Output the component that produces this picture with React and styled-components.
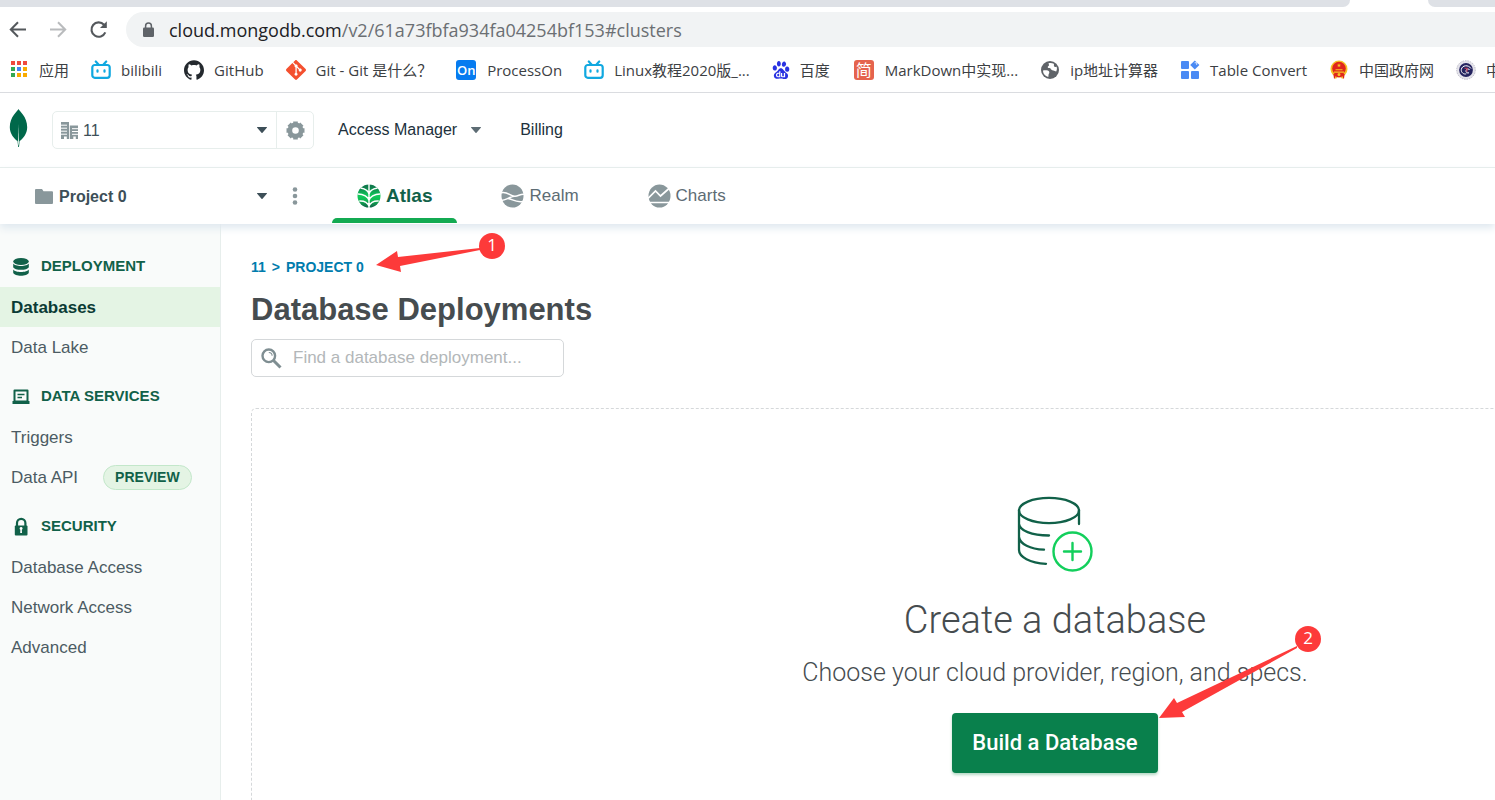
import React from "react";
import styled, { createGlobalStyle } from "styled-components";
import { SiBilibili, SiGithub, SiGit, SiBaidu } from "react-icons/si";

const sans = `"Liberation Sans", Arial, sans-serif`;
const ui = `"Open Sans", "Noto Sans CJK SC", sans-serif`;
const light = `Roboto, "Liberation Sans", sans-serif`;

const GlobalStyle = createGlobalStyle`
  *, *::before, *::after { box-sizing: border-box; }
  body { margin: 0; background: #fff; font-family: ${sans}; color: #3d4f58; }
  button, input, select { font: inherit; color: inherit; }
  a { color: inherit; text-decoration: none; }
  svg { display: block; flex: none; }
`;

const Page = styled.div`
  display: flex;
  flex-direction: column;
  height: 100vh;
  min-height: 600px;
  overflow: hidden;
`;

/* ---------- browser chrome ---------- */

const TabStrip = styled.div`
  display: flex;
  justify-content: flex-end;
  flex: none;
  gap: 78px;
  height: 7px;
`;
const StripPart = styled.div`
  background: #dee1e6;
  flex: ${(p) => (p.$last ? "0 0 67px" : "1")};
  border-radius: ${(p) => (p.$last ? "0 0 0 8px" : "0 0 8px 0")};
`;

const Toolbar = styled.div`
  display: flex;
  align-items: center;
  flex: none;
  height: 45px;
  padding: 0 0 0 8px;
`;
const NavButton = styled.button`
  display: grid;
  place-items: center;
  width: 20px;
  height: 20px;
  padding: 0;
  margin-right: 20px;
  border: 0;
  background: none;
  color: ${(p) => (p.disabled ? "#b9bbbd" : "#54585c")};
`;
const AddressBar = styled.div`
  display: flex;
  align-items: center;
  flex: 1;
  gap: 14px;
  height: 35px;
  margin-left: -2px;
  padding-left: 16px;
  border-radius: 18px 0 0 18px;
  background: #f1f3f4;
`;
const Address = styled.div`
  font: 18px/32px ${ui};
  color: #6b6f73;
  white-space: nowrap;
  b { font-weight: 400; color: #202124; }
`;

const Bookmarks = styled.nav`
  display: flex;
  align-items: center;
  flex: none;
  gap: 22px;
  height: 41px;
  padding: 0 0 5px 9px;
  border-bottom: 1px solid #dadce0;
  overflow: hidden;
`;
const Bookmark = styled.a`
  display: flex;
  align-items: center;
  flex: none;
  gap: 10px;
  font: 15px/20px ${ui};
  color: #3c4043;
  white-space: nowrap;
`;
const TileIcon = styled.span`
  display: flex;
  align-items: center;
  justify-content: center;
  flex: none;
  width: 20px;
  height: 20px;
  margin: 0 1px 0 2px;
  border-radius: 3px;
  background: ${(p) => p.$color};
  color: #fff;
  font-size: ${(p) => p.$size};
  font-weight: ${(p) => p.$weight || 400};
`;

/* ---------- top navigation ---------- */

const TopBar = styled.header`
  display: flex;
  align-items: center;
  flex: none;
  height: 75px;
  padding-left: 9px;
  border-bottom: 1px solid #e7eeec;
`;
const OrgBox = styled.div`
  display: flex;
  width: 262px;
  height: 38px;
  margin-left: 24px;
  border: 1px solid #e7eeec;
  border-radius: 5px;
`;
const Picker = styled.label`
  display: flex;
  align-items: center;
  flex: ${(p) => p.$width || "1"};
  gap: ${(p) => p.$gap};
  padding: 0 9px 0 8px;
`;
const Select = styled.select`
  flex: 1;
  min-width: 0;
  padding: 0;
  border: 0;
  background: none;
  appearance: none;
  color: #3d4f58;
  font-size: 16px;
  font-weight: ${(p) => (p.$bold ? 700 : 400)};
`;
const GearButton = styled.button`
  display: grid;
  place-items: center;
  width: 37px;
  padding: 0;
  border: 0;
  border-left: 1px solid #e7eeec;
  background: none;
  color: #89979b;
`;
const TopLink = styled.a`
  display: flex;
  align-items: center;
  gap: 14px;
  margin-left: ${(p) => p.$gap};
  font-size: 16px;
  color: #21313c;
`;

const ProductBar = styled.div`
  position: relative;
  z-index: 1;
  display: flex;
  flex: none;
  height: 56px;
  padding-left: 27px;
  background: #fff;
  box-shadow: 0 4px 8px #dfe8ef;
`;
const DotsButton = styled.button`
  width: 20px;
  padding: 0;
  margin: 0 26px 0 10px;
  border: 0;
  background: none;
  color: #89979b;
`;
const Tabs = styled.nav`
  display: flex;
  gap: 19px;
`;
const Tab = styled.a`
  display: flex;
  align-items: center;
  gap: 5px;
  padding: 0 25px;
  font-size: ${(p) => (p.$active ? "19px" : "17px")};
  font-weight: ${(p) => (p.$active ? 700 : 400)};
  color: ${(p) => (p.$active ? "#116149" : "#5d6c74")};
  position: relative;
  &::after {
    content: "";
    position: absolute;
    left: 0;
    right: 0;
    bottom: 1px;
    height: 5px;
    border-radius: 5px 5px 0 0;
    background: ${(p) => (p.$active ? "#13aa52" : "transparent")};
  }
`;

/* ---------- body ---------- */

const Body = styled.div`
  display: flex;
  flex: 1;
  min-height: 0;
`;
const Sidebar = styled.aside`
  flex: 0 0 221px;
  padding-top: 13px;
  background: #f9fbfa;
  border-right: 1px solid #e7eeec;
`;
const GroupTitle = styled.h2`
  display: flex;
  align-items: center;
  gap: 10px;
  height: 50px;
  margin: 0;
  padding: 6px 0 0 11px;
  font-size: 15px;
  font-weight: 700;
  color: #116149;
  svg { overflow: visible; }
`;
const SideLink = styled.a`
  display: flex;
  align-items: center;
  gap: 25px;
  height: 40px;
  padding: 1px 0 0 11px;
  font-size: 17px;
  font-weight: ${(p) => (p.$active ? 700 : 400)};
  color: ${(p) => (p.$active ? "#0b3b35" : "#4c5b63")};
  background: ${(p) => (p.$active ? "#e4f4e4" : "transparent")};
`;
const Badge = styled.span`
  height: 25px;
  padding: 0 11px;
  border: 1px solid #c3e7ca;
  border-radius: 13px;
  background: #e4f4e4;
  font-size: 14px;
  line-height: 23px;
  font-weight: 700;
  color: #116149;
`;

const Main = styled.main`
  position: relative;
  flex: 1;
  min-width: 0;
  padding: 33px 0 0 30px;
  overflow: hidden;
`;
const Crumbs = styled.nav`
  display: flex;
  gap: 6px;
  font-size: 14px;
  line-height: 20px;
  font-weight: 700;
  color: #007cad;
`;
const Title = styled.h1`
  margin: 13px 0 9px;
  font-size: 31px;
  line-height: 40px;
  color: #464c4f;
`;
const SearchBox = styled.label`
  display: flex;
  align-items: center;
  gap: 11px;
  width: 313px;
  height: 38px;
  padding: 0 9px;
  border: 1px solid #d5d8da;
  border-radius: 5px;
`;
const SearchInput = styled.input`
  flex: 1;
  min-width: 0;
  padding: 0;
  border: 0;
  outline: 0;
  background: none;
  font-size: 17px;
  &::placeholder { color: #b3b7b9; opacity: 1; }
`;
const EmptyState = styled.section`
  display: flex;
  flex-direction: column;
  align-items: center;
  min-width: 1608px;
  margin-top: 31px;
  padding: 87px 0 100px;
  border: 1px dashed #d5d8da;
  border-radius: 5px;
`;
const EmptyTitle = styled.h2`
  margin: 24px 0 13px;
  font: 300 38px/48px ${light};
  color: #464c4f;
`;
const EmptyText = styled.p`
  margin: 0 0 24px;
  font: 300 25px/32px ${light};
  color: #464c4f;
`;
const BuildButton = styled.button`
  height: 60px;
  padding: 0 20px;
  border: 0;
  border-radius: 4px;
  background: #09804c;
  box-shadow: 0 2px 3px #b5d9c5;
  color: #fff;
  font: 500 22px/28px ${light};
`;

const CalloutBox = styled.svg`
  position: absolute;
  left: ${(p) => p.$left}px;
  top: ${(p) => p.$top}px;
  z-index: 2;
  pointer-events: none;
  text { font: 17px ${ui}; fill: #fff; text-anchor: middle; }
`;

/* ---------- icons ---------- */

const Back = () => (
  <svg width="18" height="18" viewBox="0 0 18 18" fill="none" stroke="currentColor" strokeWidth="2">
    <path d="M17 8.500H2.500M9 1.300 1.800 8.500 9 15.700" />
  </svg>
);
const Forward = () => (
  <svg width="18" height="18" viewBox="0 0 18 18" fill="none" stroke="currentColor" strokeWidth="2">
    <path d="M1 8.500h14.500M9 1.300 16.200 8.500 9 15.700" />
  </svg>
);
const Reload = () => (
  <svg width="20" height="20" viewBox="0 0 20 20" fill="none" stroke="currentColor" strokeWidth="2.1">
    <path d="M17.300 12.400A7.200 7.200 0 1 1 16 4.700" />
    <path d="M18.800 1.300v6.800H12z" fill="currentColor" stroke="none" />
  </svg>
);
const UrlLock = () => (
  <svg width="13" height="16" viewBox="0 0 13 16" fill="#5f6368">
    <rect x="1" y="5.500" width="11" height="9.500" rx="1.300" />
    <path d="M3.600 6V4a2.900 2.900 0 0 1 5.800 0v2" fill="none" stroke="#5f6368" strokeWidth="1.500" />
  </svg>
);
const appColors = ["#f04a3e", "#f04a3e", "#f04a3e", "#34a853", "#4285f4", "#f9ab00", "#34a853", "#f9ab00", "#f9ab00"];
const Apps = () => (
  <svg width="20" height="20" viewBox="0 0 20 20">
    {appColors.map((c, i) => (
      <rect key={i} x={2 + (i % 3) * 6} y={1 + Math.floor(i / 3) * 6} width="4" height="4" fill={c} />
    ))}
  </svg>
);
const Bilibili = () => (
  <svg width="20" height="20" viewBox="0 0 20 20" fill="none" stroke="#10a8e0" strokeWidth="2.200" strokeLinecap="round">
    <rect x="1.300" y="5" width="17.400" height="12.800" rx="2.500" />
    <path d="M4.800 1.500 7.500 4.500M15.200 1.500 12.500 4.500" />
    <path d="M6.500 10.300v1.400M13.500 10.300v1.400" />
  </svg>
);
const Globe = () => (
  <svg width="20" height="20" viewBox="0 0 20 20">
    <circle cx="10" cy="10" r="9" fill="#5f6368" />
    <path d="M3 10.5c2.8-.4 5.6-.2 6.2 1.3.5 1.500-.6 1.700-.7 3.400l-.2 1.700C5 16.200 3 13.500 3 10.500zM8.500 3.200c.4 1.400 1 2.200-.3 3-1 .7-.4 2 1.300 1.900 1.300 0 1.600 2.500 3.800 2.300 1.200-.1 1.500 1 2.900 1 .8-1.600 1-3 .4-4.600-1.700.4-2.600-.2-2.700-1.400 0-.8.2-1.200-.1-1.600-1.500-.8-3.500-1-5.300-.6z" fill="#fff" />
  </svg>
);
const TableConvert = () => (
  <svg width="20" height="20" viewBox="0 0 20 20" fill="#4a8af4">
    <rect x="1" y="1" width="8" height="8" rx="1" />
    <rect x="1" y="11" width="8" height="8" rx="1" />
    <rect x="11" y="11" width="8" height="8" rx="1" />
    <path d="m14.800.6 4.600 4.400-4.600 4.600L10.200 5z" />
    <path d="m14.600 2.800 2.200-.1-.1 2.200" fill="none" stroke="#fff" strokeWidth=".8" />
  </svg>
);
const Emblem = () => (
  <svg width="20" height="20" viewBox="0 0 20 20">
    <circle cx="10" cy="9" r="8.500" fill="#f6c526" />
    <circle cx="10" cy="8.500" r="6.800" fill="#e0261c" />
    <path d="M5 18.800 4.400 14l3.300-1h4.600l3.300 1-.6 4.800-3-1.500H8z" fill="#e0261c" />
    <path d="m10 3.200.6 1.500h1.500l-1.200 1 .5 1.500-1.400-.9-1.400.9.500-1.500-1.200-1h1.500zM6.500 9.200h7v1h-7zM5 11.500h10v1.300H5zM8.500 14.500a1.500 1.500 0 1 0 3 0 1.500 1.500 0 1 0-3 0M6 16.600h1.500v1.800H6zM12.500 16.600H14v1.800h-1.500z" fill="#f6c526" />
  </svg>
);
const Seal = () => (
  <svg width="20" height="20" viewBox="0 0 20 20" fill="none">
    <circle cx="10" cy="10" r="9.300" fill="#e4e3ea" stroke="#bdbcc9" strokeDasharray="1.500 1" />
    <circle cx="10" cy="10" r="6.900" fill="#24235f" />
    <path d="M15 8.500C12.500 4.500 6 5 5.300 9.500c-.4 3 2.500 5.200 5 4.300M13 12.800c-1.600.6-3.200-.3-3-2 .2-2.200 3-2.400 3.600-.8" stroke="#fff" strokeWidth="1" />
    <path d="M8.500 8.200h2.500v3.600" stroke="#c83a54" strokeWidth="1.100" />
  </svg>
);
const Leaf = () => (
  <svg width="19" height="42" viewBox="0 0 19 42">
    <path d="M9.500 0C8.600 2.200.8 7.600.8 18.200c0 7 4.700 11.600 7.700 13.900l.7 5.900h.8l.6-5.900c3-2.300 7.600-6.900 7.600-13.900C18.200 7.600 10.400 2.200 9.500 0z" fill="#00684a" />
    <path d="M9.200 15 9 33.500l.3 3h.4l.4-3z" fill="#cfe3db" />
  </svg>
);
const Building = () => (
  <svg width="17" height="17" viewBox="0 0 17 17" fill="#89979b">
    <path d="M0 0h8v17H5.800v-2.600H3V17H0z" />
    <path d="M8.800 3.500H17V17h-2.200v-2.600h-2.500V17H8.800z" />
    <path d="M0 3.200h6M0 6.200h6M0 9.200h6M0 12.200h6M11 6.700h6M11 9.500h6M11 12.300h6" stroke="#fff" strokeWidth="1" />
  </svg>
);
const Caret = ({ color = "#3d4f58" }) => (
  <svg width="10" height="6" viewBox="0 0 10 6" fill={color}>
    <path d="M.5 0h9c.5 0 .6.400.3.700L5.500 5.700a.7.700 0 0 1-1 0L.2.700C-.1.400 0 0 .5 0z" />
  </svg>
);
const Gear = () => (
  <svg width="19" height="19" viewBox="-9.500 -9.500 19 19" fill="none" stroke="currentColor">
    <circle r="5.600" strokeWidth="4.600" />
    {[0, 45, 90, 135].map((a) => (
      <path key={a} d="M0-6v-3M0 6v3" strokeWidth="4.600" transform={`rotate(${a})`} />
    ))}
  </svg>
);
const Folder = () => (
  <svg width="18" height="15" viewBox="0 0 18 15" fill="#89979b">
    <path d="M1 0h6l1.500 2.200H17a1 1 0 0 1 1 1V14a1 1 0 0 1-1 1H1a1 1 0 0 1-1-1V1a1 1 0 0 1 1-1z" />
  </svg>
);
const Dots = () => (
  <svg width="20" height="18" viewBox="0 0 20 18" fill="currentColor">
    <circle cx="9" cy="2.500" r="2.300" />
    <circle cx="9" cy="9" r="2.300" />
    <circle cx="9" cy="15.500" r="2.300" />
  </svg>
);
const AtlasIcon = () => (
  <svg width="24" height="24" viewBox="0 0 24 24">
    <defs>
      <linearGradient id="atlasFill" x1="0" y1="0" x2="0" y2="1">
        <stop offset=".1" stopColor="#0f7a4c" />
        <stop offset=".5" stopColor="#10cc5a" />
        <stop offset=".7" stopColor="#10b552" />
        <stop offset="1" stopColor="#116149" />
      </linearGradient>
    </defs>
    <circle cx="12" cy="12" r="11.500" fill="url(#atlasFill)" />
    <g fill="none" stroke="#fff" strokeWidth="1.400">
      <path d="M12 0v24M12 10.200C11.500 7 8 4.800 3.500 4M12 10.200c.5-3.200 4-5.400 8.500-6.200M12 16.500C11.500 13.200 6.500 9.800.5 10M12 16.500c.5-3.300 5.500-6.700 11.500-6.500M12 22.500c-.5-3.300-4.500-6-9.700-5.500M12 22.500c.5-3.300 4.500-6 9.700-5.500" />
    </g>
  </svg>
);
const RealmIcon = () => (
  <svg width="23" height="24" viewBox="0 0 23 24">
    <ellipse cx="11.500" cy="12" rx="11" ry="11.500" fill="#89979b" />
    <path d="M0 8.800c6.500-2 9 3.700 14 3.400 3.500-.2 5-2.200 9-2M0 16.400c4-.2 5.500-1.400 8-2.500 2.500-1.100 4.200-2 6-1.700M7 14.400c5 .8 7 4.500 15.500 3" fill="none" stroke="#fff" strokeWidth="1.500" />
  </svg>
);
const ChartsIcon = () => (
  <svg width="23" height="24" viewBox="0 0 23 24">
    <ellipse cx="11.500" cy="12" rx="11" ry="11.500" fill="#89979b" />
    <path d="M0 14.500 7.500 7l5 5L21 4.500M1 18.500h21" fill="none" stroke="#fff" strokeWidth="1.700" />
  </svg>
);
const Stack = () => (
  <svg width="20" height="20" viewBox="0 -2 20 20" fill="#116149">
    <ellipse cx="10" cy="4.500" rx="7.800" ry="3.500" />
    <path d="M2.200 6.500c1.500 3.300 14.100 3.300 15.600 0v3.800c-1.400 3.400-14.200 3.400-15.600 0z" />
    <path d="M2.200 12.400c1.500 3.300 14.100 3.300 15.600 0v3.400c-1.400 3.900-14.200 3.900-15.600 0z" />
  </svg>
);
const Laptop = () => (
  <svg width="20" height="20" viewBox="0 -2 20 20" fill="#116149">
    <path fillRule="evenodd" d="M2.500 3.500a1 1 0 0 1 1-1h13a1 1 0 0 1 1 1v10.500h1v3h-17v-3h1zM4.500 4.500v9h11v-9z" />
    <path d="M6.500 7.500h7M6.500 10.500h4.500" stroke="#116149" strokeWidth="1.300" />
  </svg>
);
const Padlock = () => (
  <svg width="20" height="20" viewBox="0 -2 20 20" fill="#116149">
    <rect x="3.800" y="8.500" width="12.700" height="10" rx="1" />
    <path d="M6 9V6a4.200 4.200 0 0 1 8.400 0v3" fill="none" stroke="#116149" strokeWidth="2.200" />
    <path d="M8.600 11.500a1.500 1.500 0 1 1 2.200 1.300l.2 3.200H9.200l.2-3.200a1.500 1.500 0 0 1-.8-1.300z" fill="#fff" />
  </svg>
);
const Magnifier = () => (
  <svg width="21" height="21" viewBox="0 0 21 21" fill="none" stroke="#7f8e92">
    <circle cx="7.800" cy="7.800" r="6.300" strokeWidth="2.400" />
    <path d="m12.500 12.500 7 7" strokeWidth="3" />
    <path d="M7.800 4.500a3.300 3.300 0 0 1 3.300 3.300" strokeWidth="1.100" />
  </svg>
);
const NewDatabase = () => (
  <svg width="76" height="76" viewBox="0 0 76 76" fill="none" strokeLinecap="round">
    <g stroke="#116149" strokeWidth="2.300">
      <ellipse cx="32" cy="14.500" rx="30" ry="12.600" />
      <path d="M2 14.500V54c0 7 11 12.800 27 13.800M62 14.500V28M2 28c1 6.500 12 11.500 30 11.500M2 41c1 7 11 12.200 25 12.700" />
    </g>
    <g stroke="#13cf5c" strokeWidth="2.400">
      <circle cx="55.500" cy="55.500" r="19" />
      <path d="M47 55.500h17M55.500 47v17" />
    </g>
  </svg>
);

const bookmarks = [
  { label: "应用", icon: <Apps /> },
  { label: "bilibili", icon: <Bilibili /> },
  { label: "GitHub", icon: <SiGithub size={20} color="#24292e" /> },
  { label: "Git - Git 是什么？", icon: <SiGit size={20} color="#f4502f" /> },
  { label: "ProcessOn", icon: <TileIcon $color="#067bf0" $size="13px" $weight={600}>On</TileIcon> },
  { label: "Linux教程2020版_...", icon: <Bilibili /> },
  { label: "百度", icon: <SiBaidu size={18} color="#2932e1" /> },
  { label: "MarkDown中实现...", icon: <TileIcon $color="#e5634d" $size="16px">简</TileIcon> },
  { label: "ip地址计算器", icon: <Globe /> },
  { label: "Table Convert", icon: <TableConvert /> },
  { label: "中国政府网", icon: <Emblem /> },
  { label: "中国", icon: <Seal /> },
];

const groups = [
  { title: "DEPLOYMENT", icon: <Stack />, links: [{ label: "Databases", active: true }, { label: "Data Lake" }] },
  { title: "DATA SERVICES", icon: <Laptop />, links: [{ label: "Triggers" }, { label: "Data API", badge: "PREVIEW" }] },
  { title: "SECURITY", icon: <Padlock />, links: [{ label: "Database Access" }, { label: "Network Access" }, { label: "Advanced" }] },
];

const tabs = [
  { label: "Atlas", icon: <AtlasIcon />, active: true },
  { label: "Realm", icon: <RealmIcon /> },
  { label: "Charts", icon: <ChartsIcon /> },
];

const Callout = ({ left, top, width, height, arrow, x, y, number }) => (
  <CalloutBox $left={left} $top={top} width={width} height={height}>
    <polygon points={arrow} fill="#fd3a3a" />
    <circle cx={x} cy={y} r="13" fill="#fd3a3a" />
    <text x={x} y={y + 5}>{number}</text>
  </CalloutBox>
);

export default function App() {
  return (
    <Page>
      <GlobalStyle />
      <TabStrip>
        <StripPart />
        <StripPart $last />
      </TabStrip>
      <Toolbar>
        <NavButton aria-label="Back"><Back /></NavButton>
        <NavButton aria-label="Forward" disabled><Forward /></NavButton>
        <NavButton aria-label="Reload"><Reload /></NavButton>
        <AddressBar>
          <UrlLock />
          <Address role="textbox" aria-label="Address">
            <b>cloud.mongodb.com</b>/v2/61a73fbfa934fa04254bf153#clusters
          </Address>
        </AddressBar>
      </Toolbar>
      <Bookmarks aria-label="Bookmarks">
        {bookmarks.map((b) => (
          <Bookmark href="#" key={b.label}>{b.icon}{b.label}</Bookmark>
        ))}
      </Bookmarks>

      <TopBar>
        <Leaf />
        <OrgBox>
          <Picker $gap="5px">
            <Building />
            <Select aria-label="Organization"><option>11</option></Select>
            <Caret />
          </Picker>
          <GearButton aria-label="Organization settings"><Gear /></GearButton>
        </OrgBox>
        <TopLink href="#" $gap="24px">Access Manager <Caret color="#5d6c74" /></TopLink>
        <TopLink href="#" $gap="39px">Billing</TopLink>
      </TopBar>

      <ProductBar>
        <Picker $width="0 0 249px" $gap="6px">
          <Folder />
          <Select $bold aria-label="Project"><option>Project 0</option></Select>
          <Caret />
        </Picker>
        <DotsButton aria-label="Project options"><Dots /></DotsButton>
        <Tabs>
          {tabs.map((t) => (
            <Tab href="#" key={t.label} $active={t.active}>{t.icon}{t.label}</Tab>
          ))}
        </Tabs>
      </ProductBar>

      <Body>
        <Sidebar>
          {groups.map((g) => (
            <nav key={g.title} aria-label={g.title}>
              <GroupTitle>{g.icon}{g.title}</GroupTitle>
              {g.links.map((l) => (
                <SideLink href="#" key={l.label} $active={l.active}>
                  {l.label}
                  {l.badge && <Badge>{l.badge}</Badge>}
                </SideLink>
              ))}
            </nav>
          ))}
        </Sidebar>
        <Main>
          <Crumbs aria-label="Breadcrumb">
            <a href="#">11</a>
            <span>&gt;</span>
            <a href="#">PROJECT 0</a>
          </Crumbs>
          <Title>Database Deployments</Title>
          <SearchBox>
            <Magnifier />
            <SearchInput aria-label="Find a database deployment" placeholder="Find a database deployment..." />
          </SearchBox>
          <EmptyState>
            <NewDatabase />
            <EmptyTitle>Create a database</EmptyTitle>
            <EmptyText>Choose your cloud provider, region, and specs.</EmptyText>
            <BuildButton>Build a Database</BuildButton>
          </EmptyState>
          <Callout
            left={155} top={8} width={132} height={44} x={116} y={14} number="1"
            arrow="0,33 21,19 22,25 104,16 104,18 24,34 25,40"
          />
          <Callout
            left={938} top={402} width={164} height={96} x={149} y={13} number="2"
            arrow="0,92 15,72 18,77 138,20 138,22 23,86 26,91"
          />
        </Main>
      </Body>
    </Page>
  );
}
